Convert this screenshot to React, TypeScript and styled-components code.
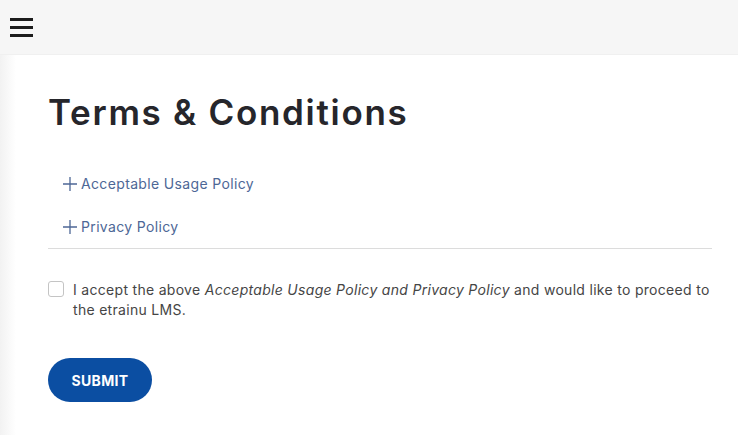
import { useState } from "react";
import styled, { createGlobalStyle } from "styled-components";

const GlobalStyle = createGlobalStyle`
  body {
    margin: 0;
    background: #ffffff;
    font-family: "Inter", "Noto Sans", sans-serif;
  }
`;

const Page = styled.div`
  width: 100vw;
  min-height: 100vh;
  display: flex;
  flex-direction: column;
`;

const TopBar = styled.header`
  height: 54px;
  background: #f6f6f6;
  display: flex;
  align-items: center;
  padding-left: 10px;
  border-bottom: 1px solid #f0f0f0;
`;

const MenuButton = styled.button`
  background: none;
  border: none;
  padding: 0;
  width: 24px;
  height: 24px;
  display: flex;
  flex-direction: column;
  justify-content: center;
  gap: 5px;
  cursor: pointer;
  span {
    display: block;
    width: 23px;
    height: 3px;
    background: #1c1c1c;
  }
`;

const Main = styled.main`
  flex: 1;
  padding: 36px 26px 30px 48px;
  background: linear-gradient(to right, #f2f2f2 0px, #ffffff 16px);
`;

const Title = styled.h1`
  margin: 0 0 29px;
  font-size: 35px;
  font-weight: 600;
  color: #26262b;
  letter-spacing: 1.7px;
`;

const PolicyList = styled.div`
  border-bottom: 1px solid #dcdcdc;
`;

const PolicyRow = styled.button`
  display: flex;
  align-items: center;
  gap: 4px;
  height: 43px;
  padding: 0 0 0 15px;
  background: none;
  border: none;
  font-family: inherit;
  font-size: 14px;
  letter-spacing: 0.35px;
  color: #4d6796;
  cursor: pointer;
`;

const Accept = styled.label`
  display: flex;
  align-items: flex-start;
  gap: 9px;
  margin-top: 31px;
  font-size: 14px;
  line-height: 20px;
  letter-spacing: 0.3px;
  color: #454545;
  em {
    font-style: italic;
  }
`;

const Box = styled.span<{ $checked: boolean }>`
  flex: none;
  width: 14px;
  height: 14px;
  margin-top: 1px;
  border: 1px solid #c4c4c4;
  border-radius: 3px;
  background: ${(p) => (p.$checked ? "#0b4ea2" : "#fff")};
`;

const Submit = styled.button`
  margin-top: 38px;
  width: 104px;
  height: 44px;
  border: none;
  border-radius: 22px;
  background: #0b4ea2;
  color: #fff;
  font-family: inherit;
  font-size: 14px;
  font-weight: 700;
  letter-spacing: 0.3px;
  cursor: pointer;
`;

const Plus = () => (
  <svg width="14" height="14" viewBox="0 0 14 14">
    <path d="M7 0v14M0 7h14" stroke="#4d6796" strokeWidth="1.3" fill="none" />
  </svg>
);

export default function App() {
  const [checked, setChecked] = useState(false);
  return (
    <Page>
      <GlobalStyle />
      <TopBar>
        <MenuButton aria-label="menu">
          <span />
          <span />
          <span />
        </MenuButton>
      </TopBar>
      <Main>
        <Title>Terms &amp; Conditions</Title>
        <PolicyList>
          <PolicyRow>
            <Plus />
            Acceptable Usage Policy
          </PolicyRow>
          <PolicyRow>
            <Plus />
            Privacy Policy
          </PolicyRow>
        </PolicyList>
        <Accept onClick={() => setChecked(!checked)}>
          <Box $checked={checked} />
          <span>
            I accept the above <em>Acceptable Usage Policy and Privacy Policy</em> and would like to
            proceed to the etrainu LMS.
          </span>
        </Accept>
        <Submit>SUBMIT</Submit>
      </Main>
    </Page>
  );
}
